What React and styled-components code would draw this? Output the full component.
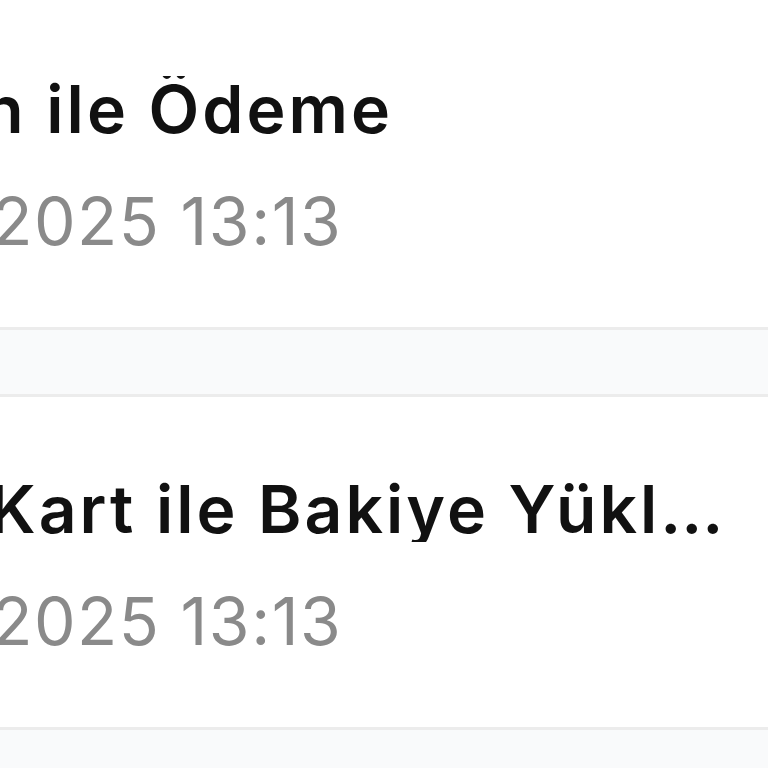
import styled, { createGlobalStyle } from "styled-components";

const transactions = [
  { title: "Bitcoin ile Ödeme", date: "22.06.2025 13:13" },
  { title: "Kredi Kart ile Bakiye Yükleme", date: "22.06.2025 13:13" },
];

const GlobalStyle = createGlobalStyle`
  html, body {
    margin: 0;
    padding: 0;
    background: #f9fafb;
    font-family: Inter, "Noto Sans", sans-serif;
    overflow: hidden;
  }
`;

const App = () => {
  return (
    <>
      <GlobalStyle />
      <List>
        {transactions.map((item, index) => (
          <Card key={index}>
            <Info>
              <Title>{item.title}</Title>
              <DateText>{item.date}</DateText>
            </Info>
          </Card>
        ))}
      </List>
    </>
  );
};

export default App;

const List = styled.div`
  display: flex;
  flex-direction: column;
  gap: 64px;
  margin-top: -6px;
  width: 768px;
  overflow: hidden;
`;

const Card = styled.div`
  background: #ffffff;
  border-top: 3px solid #ececec;
  border-bottom: 3px solid #ececec;
  height: 336px;
  box-sizing: border-box;
  padding-top: 79px;
`;

const Info = styled.div`
  display: flex;
  flex-direction: column;
  gap: 46px;
  margin-left: -214px;
`;

const Title = styled.div`
  font-size: 66px;
  font-weight: 600;
  letter-spacing: 3px;
  color: #111111;
  line-height: 1;
  white-space: nowrap;
  overflow: hidden;
  text-overflow: ellipsis;
  width: 940px;
`;

const DateText = styled.div`
  font-size: 66px;
  font-weight: 400;
  letter-spacing: 1.5px;
  color: #8a8a8a;
  line-height: 1;
  white-space: nowrap;
`;
